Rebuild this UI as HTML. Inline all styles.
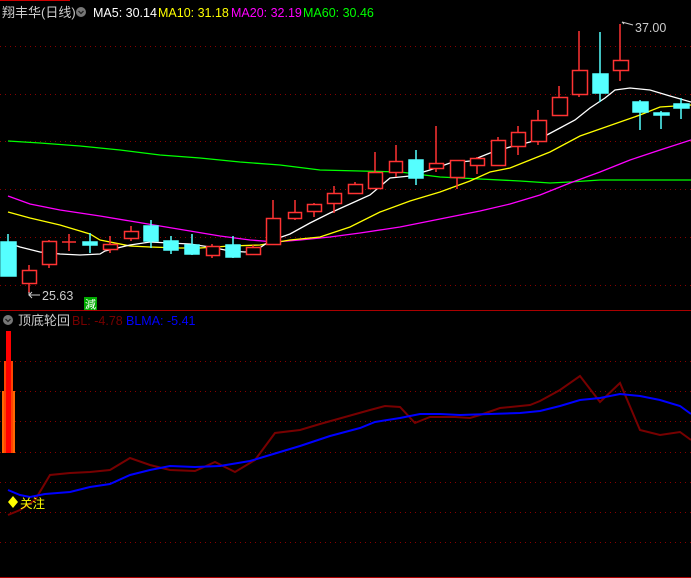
<!DOCTYPE html>
<html><head><meta charset="utf-8"><style>
body{margin:0;background:#000;width:691px;height:578px;overflow:hidden;font-family:"Liberation Sans","Noto Sans CJK SC",sans-serif}
svg{position:absolute;left:0;top:0}
</style></head><body>
<svg width="691" height="578" xmlns="http://www.w3.org/2000/svg" font-family="Liberation Sans, Noto Sans CJK SC, sans-serif">
<line x1="0" y1="0.5" x2="70" y2="0.5" stroke="#c00" />
<g stroke="#800" stroke-dasharray="1,4">
<line x1="0" y1="46.5" x2="691" y2="46.5"/><line x1="0" y1="94.5" x2="691" y2="94.5"/>
<line x1="0" y1="141.5" x2="691" y2="141.5"/><line x1="0" y1="189.5" x2="691" y2="189.5"/>
<line x1="0" y1="237.5" x2="691" y2="237.5"/><line x1="0" y1="285.5" x2="691" y2="285.5"/>
<line x1="0" y1="361.5" x2="691" y2="361.5"/><line x1="0" y1="391.5" x2="691" y2="391.5"/>
<line x1="0" y1="421.5" x2="691" y2="421.5"/><line x1="0" y1="452.5" x2="691" y2="452.5"/>
<line x1="0" y1="482.5" x2="691" y2="482.5"/><line x1="0" y1="512.5" x2="691" y2="512.5"/>
<line x1="0" y1="542.5" x2="691" y2="542.5"/>
</g>
<line x1="0" y1="310.5" x2="691" y2="310.5" stroke="#a00"/>
<line x1="0" y1="577.5" x2="691" y2="577.5" stroke="#a00"/>
<!-- header -->
<text x="2" y="17" font-size="13" fill="#ccc">翔丰华(日线)</text>
<circle cx="81" cy="12" r="5" fill="#777"/><path d="M78.5 11 L81 13.5 L83.5 11" stroke="#222" fill="none" stroke-width="1.3"/>
<text x="93" y="17" font-size="12.5" fill="#fff">MA5: 30.14</text>
<text x="158" y="17" font-size="12.5" fill="#ff0">MA10: 31.18</text>
<text x="231" y="17" font-size="12.5" fill="#f0f">MA20: 32.19</text>
<text x="303" y="17" font-size="12.5" fill="#0f0">MA60: 30.46</text>
<!-- MA lines -->
<polyline fill="none" stroke="#0f0" stroke-width="1.3" points="8,141 40,143 80,146 120,150 160,155 200,158 240,162 280,165 320,170 360,171 400,172 440,177 480,179 520,181 550,183 570,182 600,180 691,180"/>
<polyline fill="none" stroke="#f0f" stroke-width="1.3" points="8,196 30,204 60,210 100,216 130,221 160,226 190,231 220,236 250,240 275,242 300,240 330,237 360,233 400,227 440,219 480,211 510,204 540,195 570,183 600,172 630,160 660,150 691,140"/>
<polyline fill="none" stroke="#ff0" stroke-width="1.3" points="8,212 30,218 60,225 90,234 100,240 130,246 150,247 180,248 200,248 230,246 260,245 290,240 320,237 350,227 380,212 410,201 440,192 470,181 490,172 510,168 530,160 550,152 580,136 600,129 620,122 640,115 660,107 691,105"/>
<polyline fill="none" stroke="#fff" stroke-width="1.3" points="8,243 20,247 40,252 60,254 80,255 100,254 105,251 130,245 150,242 170,243 190,244 210,247 230,251 245,252 255,251 270,241 290,234 310,223 330,213 350,204 370,195 390,178 410,176 430,170 450,163 470,161 490,153 510,147 530,142 545,136 560,128 575,120 590,108 605,98 615,90 630,88 650,90 670,96 691,102"/>
<!-- candles -->
<g stroke-width="1.5">
<g stroke="#5ff" fill="#5ff">
<line x1="8" y1="234" x2="8" y2="276"/><rect x="1" y="242" width="15" height="34"/>
<line x1="90" y1="233" x2="90" y2="253"/><rect x="83" y="242" width="14" height="3"/>
<line x1="151" y1="220" x2="151" y2="248"/><rect x="144" y="226" width="14" height="15"/>
<line x1="171" y1="236" x2="171" y2="254"/><rect x="164" y="241" width="14" height="9"/>
<line x1="192" y1="234" x2="192" y2="255"/><rect x="185" y="245" width="14" height="9"/>
<line x1="233" y1="236" x2="233" y2="258"/><rect x="226" y="245" width="14" height="12"/>
<line x1="416" y1="150" x2="416" y2="185"/><rect x="409" y="160" width="14" height="18"/>
<line x1="600" y1="32" x2="600" y2="102"/><rect x="593" y="74" width="15" height="19"/>
<line x1="640" y1="100" x2="640" y2="130"/><rect x="633" y="102" width="15" height="10"/>
<line x1="661" y1="111" x2="661" y2="129"/><rect x="654" y="113" width="15" height="2"/>
<line x1="681" y1="98" x2="681" y2="119"/><rect x="674" y="104" width="15" height="4"/>
</g>
<g stroke="#f33" fill="none">
<line x1="29" y1="265" x2="29" y2="293"/><rect x="22.5" y="270.5" width="14" height="13" fill="#000"/>
<line x1="49" y1="240" x2="49" y2="268"/><rect x="42.5" y="241.5" width="14" height="23" fill="#000"/>
<line x1="69" y1="234" x2="69" y2="251"/><line x1="62" y1="242" x2="76" y2="242"/>
<line x1="110" y1="236" x2="110" y2="253"/><rect x="103.5" y="244.5" width="14" height="5" fill="#000"/>
<line x1="131" y1="226" x2="131" y2="241"/><rect x="124.5" y="231.5" width="14" height="7" fill="#000"/>
<line x1="212" y1="244" x2="212" y2="258"/><rect x="206.5" y="246.5" width="13" height="9" fill="#000"/>
<line x1="253" y1="245" x2="253" y2="255"/><rect x="246.5" y="247.5" width="14" height="7" fill="#000"/>
<line x1="273" y1="200" x2="273" y2="244"/><rect x="266.5" y="218.5" width="14" height="26" fill="#000"/>
<line x1="295" y1="200" x2="295" y2="220"/><rect x="288.5" y="212.5" width="13" height="6" fill="#000"/>
<line x1="314" y1="203" x2="314" y2="217"/><rect x="307.5" y="204.5" width="14" height="7" fill="#000"/>
<line x1="334" y1="186" x2="334" y2="213"/><rect x="327.5" y="193.5" width="14" height="10" fill="#000"/>
<line x1="355" y1="182" x2="355" y2="193"/><rect x="348.5" y="184.5" width="14" height="9" fill="#000"/>
<line x1="375" y1="152" x2="375" y2="188"/><rect x="368.5" y="172.5" width="14" height="16" fill="#000"/>
<line x1="396" y1="145" x2="396" y2="177"/><rect x="389.5" y="161.5" width="13" height="11" fill="#000"/>
<line x1="436" y1="126" x2="436" y2="172"/><rect x="429.5" y="163.5" width="14" height="5" fill="#000"/>
<line x1="457" y1="160" x2="457" y2="189"/><rect x="450.5" y="160.5" width="14" height="17" fill="#000"/>
<line x1="477" y1="157" x2="477" y2="174"/><rect x="470.5" y="158.5" width="14" height="7" fill="#000"/>
<line x1="498" y1="137" x2="498" y2="166"/><rect x="491.5" y="140.5" width="14" height="25" fill="#000"/>
<line x1="518" y1="126" x2="518" y2="155"/><rect x="511.5" y="132.5" width="14" height="14" fill="#000"/>
<line x1="538" y1="110" x2="538" y2="145"/><rect x="531.5" y="120.5" width="15" height="21" fill="#000"/>
<line x1="559" y1="86" x2="559" y2="115"/><rect x="552.5" y="97.5" width="15" height="18" fill="#000"/>
<line x1="579" y1="31" x2="579" y2="97"/><rect x="572.5" y="70.5" width="15" height="24" fill="#000"/>
<line x1="620" y1="24" x2="620" y2="81"/><rect x="613.5" y="60.5" width="15" height="10" fill="#000"/>
</g>
</g>
<!-- annotations -->
<path d="M622 22 L624 24 M622 22 L633 25" stroke="#ccc" fill="none"/>
<text x="635" y="32" font-size="12.5" fill="#ccc">37.00</text>
<path d="M29 292 L29 295 L40 295 M32 292 L29 295 L32 298" stroke="#ccc" fill="none"/>
<text x="42" y="300" font-size="12.5" fill="#ccc">25.63</text>
<rect x="84" y="297" width="13" height="13" fill="#0a0"/>
<text x="85" y="308" font-size="11" fill="#fff">減</text>
<!-- lower header -->
<circle cx="8" cy="320" r="5" fill="#777"/><path d="M5.5 319 L8 321.5 L10.5 319" stroke="#222" fill="none" stroke-width="1.3"/>
<text x="18" y="325" font-size="13" fill="#ccc">顶底轮回</text>
<text x="72" y="325" font-size="12.5" fill="#700">BL: -4.78</text>
<text x="126" y="325" font-size="12.5" fill="#00f">BLMA: -5.41</text>
<!-- bars -->
<rect x="2" y="391" width="13" height="62" fill="#f60"/>
<rect x="4" y="361" width="9" height="92" fill="#f40"/>
<rect x="6" y="331" width="5" height="122" fill="#f00"/>
<!-- lower lines -->
<polyline fill="none" stroke="#700" stroke-width="2" points="8,515 20,510 35,500 50,475 70,473 90,472 110,470 130,458 150,465 170,470 195,471 215,462 235,472 255,460 275,433 300,430 320,424 345,417 370,410 385,406 400,407 415,423 430,417 455,417 470,418 480,415 500,408 530,405 540,401 560,390 580,376 600,402 620,383 640,430 660,435 680,432 691,440"/>
<polyline fill="none" stroke="#00f" stroke-width="2" points="8,490 20,495 30,497 45,494 70,492 90,487 110,484 130,475 150,470 170,466 195,467 220,466 250,461 270,455 300,446 330,436 360,428 375,422 400,418 420,414 440,414 460,415 490,414 520,413 540,411 560,406 580,400 600,398 620,394 640,396 660,400 680,406 691,414"/>
<path d="M13 496 L18 502 L13 508 L8 502 Z" fill="#ff0"/>
<text x="20" y="508" font-size="12.5" fill="#ff0">关注</text>
</svg>
</body></html>
